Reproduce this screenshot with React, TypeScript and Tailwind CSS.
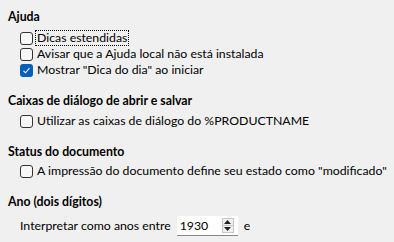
import React from "react";

function Box({ checked }: { checked?: boolean }) {
  if (checked) {
    return (
      <span className="w-[13px] h-[13px] rounded-[3px] bg-[#005fb8] flex items-center justify-center shrink-0">
        <svg width="9" height="9" viewBox="0 0 9 9">
          <path d="M1.5 4.8 L3.5 6.8 L7.5 2.2" fill="none" stroke="white" strokeWidth="1.1" />
        </svg>
      </span>
    );
  }
  return <span className="w-[13px] h-[13px] rounded-[3px] border border-[#333] bg-[#f7f7f7] shrink-0" />;
}

function Row({ checked, children, focus }: { checked?: boolean; children: React.ReactNode; focus?: boolean }) {
  return (
    <div className="flex items-center h-[16px] pl-[20px] whitespace-nowrap">
      <Box checked={checked} />
      <span className={"ml-[3px] px-[1px] leading-[14px] " + (focus ? "outline outline-1 outline-dotted outline-black" : "")}>
        {children}
      </span>
    </div>
  );
}

export default function App() {
  return (
    <div
      className="w-[394px] h-[242px] bg-[#f0f0f0] text-[#000] text-[12.3px] overflow-hidden whitespace-nowrap"
      style={{ fontFamily: 'Lato, "Noto Sans", sans-serif' }}
    >
      <div className="pt-[9px] pl-[8px] font-bold leading-[16px]">Ajuda</div>
      <div className="mt-[5px] flex flex-col">
        <Row focus>Dicas estendidas</Row>
        <Row>Avisar que a Ajuda local não está instalada</Row>
        <Row checked>Mostrar "Dica do dia" ao iniciar</Row>
      </div>
      <div className="mt-[15px] pl-[8px] font-bold leading-[16px]">Caixas de diálogo de abrir e salvar</div>
      <div className="mt-[4px]">
        <Row>Utilizar as caixas de diálogo do %PRODUCTNAME</Row>
      </div>
      <div className="mt-[15px] pl-[8px] font-bold leading-[16px]">Status do documento</div>
      <div className="mt-[3px]">
        <Row>A impressão do documento define seu estado como "modificado"</Row>
      </div>
      <div className="mt-[15px] pl-[8px] font-bold leading-[16px]">Ano (dois dígitos)</div>
      <div className="mt-[6px] flex items-center h-[20px] pl-[20px]">
        <span>Interpretar como anos entre</span>
        <div className="ml-[6px] flex h-[20px] w-[61px] bg-white border-b border-[#888]">
          <span className="flex-1 pl-[3px] leading-[19px]">1930</span>
          <div className="w-[12px] my-[2px] mr-[4px] flex flex-col border border-[#c8c8c8] bg-[#f0f0f0]">
            <div className="flex-1 flex items-center justify-center border-b border-[#c8c8c8]">
              <svg width="7" height="4" viewBox="0 0 7 4"><path d="M0 4 L3.5 0 L7 4 Z" fill="#222" /></svg>
            </div>
            <div className="flex-1 flex items-center justify-center">
              <svg width="7" height="4" viewBox="0 0 7 4"><path d="M0 0 L3.5 4 L7 0 Z" fill="#222" /></svg>
            </div>
          </div>
        </div>
        <span className="ml-[6px]">e</span>
      </div>
    </div>
  );
}
